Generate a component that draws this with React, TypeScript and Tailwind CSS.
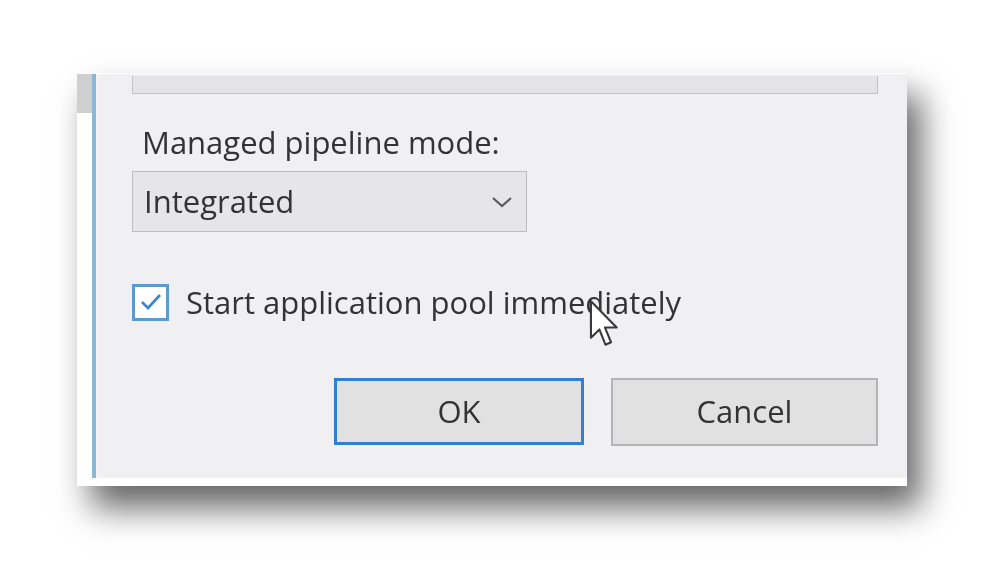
import React from "react";

function Chevron() {
    return (
        <svg width="22" height="12" viewBox="0 0 22 12" fill="none">
            <path d="M2 2 L11 10 L20 2" stroke="#5a5a5a" strokeWidth="2.2" />
        </svg>
    );
}

function Cursor() {
    return (
        <svg
            className="absolute left-[588px] top-[299px]"
            width="34"
            height="48"
            viewBox="0 0 14 20.5"
        >
            <path
                d="M1 1 L1 16.5 L4.6 13 L7.2 19.5 L9.6 18.5 L7 12.2 L12 12.2 Z"
                fill="#ffffff"
                stroke="#3a3a3a"
                strokeWidth="0.9"
                strokeLinejoin="round"
            />
        </svg>
    );
}

export default function App() {
    return (
        <div
            className="relative w-[987px] h-[582px] bg-white overflow-hidden"
            style={{ fontFamily: '"Open Sans", "Noto Sans", sans-serif' }}
        >
            {/* Dialog crop */}
            <div className="ml-[77px] mt-[73px] w-[830px] h-[413px] flex flex-col bg-white border-t border-white shadow-[14px_22px_32px_rgba(0,0,0,0.6)]">
                <div className="flex flex-1 blur-[0.4px]">
                    {/* left strip */}
                    <div className="w-[15px] flex flex-col">
                        <div className="h-[39px] bg-[#cfcfd2]" />
                        <div className="flex-1 bg-white" />
                    </div>
                    <div className="w-[4px] bg-[#8cb8d8]" />
                    <div className="w-[3px] bg-[#f6f2f3]" />

                    {/* content */}
                    <div className="flex-1 bg-[#f0eff2] pl-[33px] pr-[29px] flex flex-col font-medium">
                        <div className="mt-[2px] h-[18px] bg-[#e4e4e6] border-x border-b border-[#c2c2c4] rounded-b-[1px]" />

                        <div className="mt-[29px] text-[31px] leading-[38px] text-[#333333] pl-[10px]">
                            Managed pipeline mode:
                        </div>

                        <div className="mt-[10px] w-[395px] h-[61px] bg-[#e6e6e8] border border-[#bdbdbf] flex items-center justify-between pl-[11px] pr-[13px]">
                            <span className="text-[31px] text-[#333333]">Integrated</span>
                            <Chevron />
                        </div>

                        <div className="mt-[47px] flex items-center">
                            <div className="w-[37px] h-[37px] border-[3px] border-[#5b9bd1] bg-white flex items-center justify-center">
                                <svg width="24" height="20" viewBox="0 0 24 20" fill="none">
                                    <path d="M3 10 L9 16 L21 3" stroke="#3f86c8" strokeWidth="2.6" />
                                </svg>
                            </div>
                            <span className="ml-[17px] text-[31px] text-[#333333]">
                                Start application pool immediately
                            </span>
                        </div>

                        <div className="mt-[52px] flex justify-end gap-[27px]">
                            <button className="w-[250px] h-[67px] bg-[#e1e1e1] border-[3px] border-[#2f7fd6] text-[31px] text-[#333333]">
                                OK
                            </button>
                            <button className="w-[267px] h-[68px] bg-[#e1e1e1] border-2 border-[#b4b4b6] text-[31px] text-[#333333]">
                                Cancel
                            </button>
                        </div>
                    </div>
                </div>
                <div className="h-[8px] bg-white" />
            </div>
            <Cursor />
        </div>
    );
}
